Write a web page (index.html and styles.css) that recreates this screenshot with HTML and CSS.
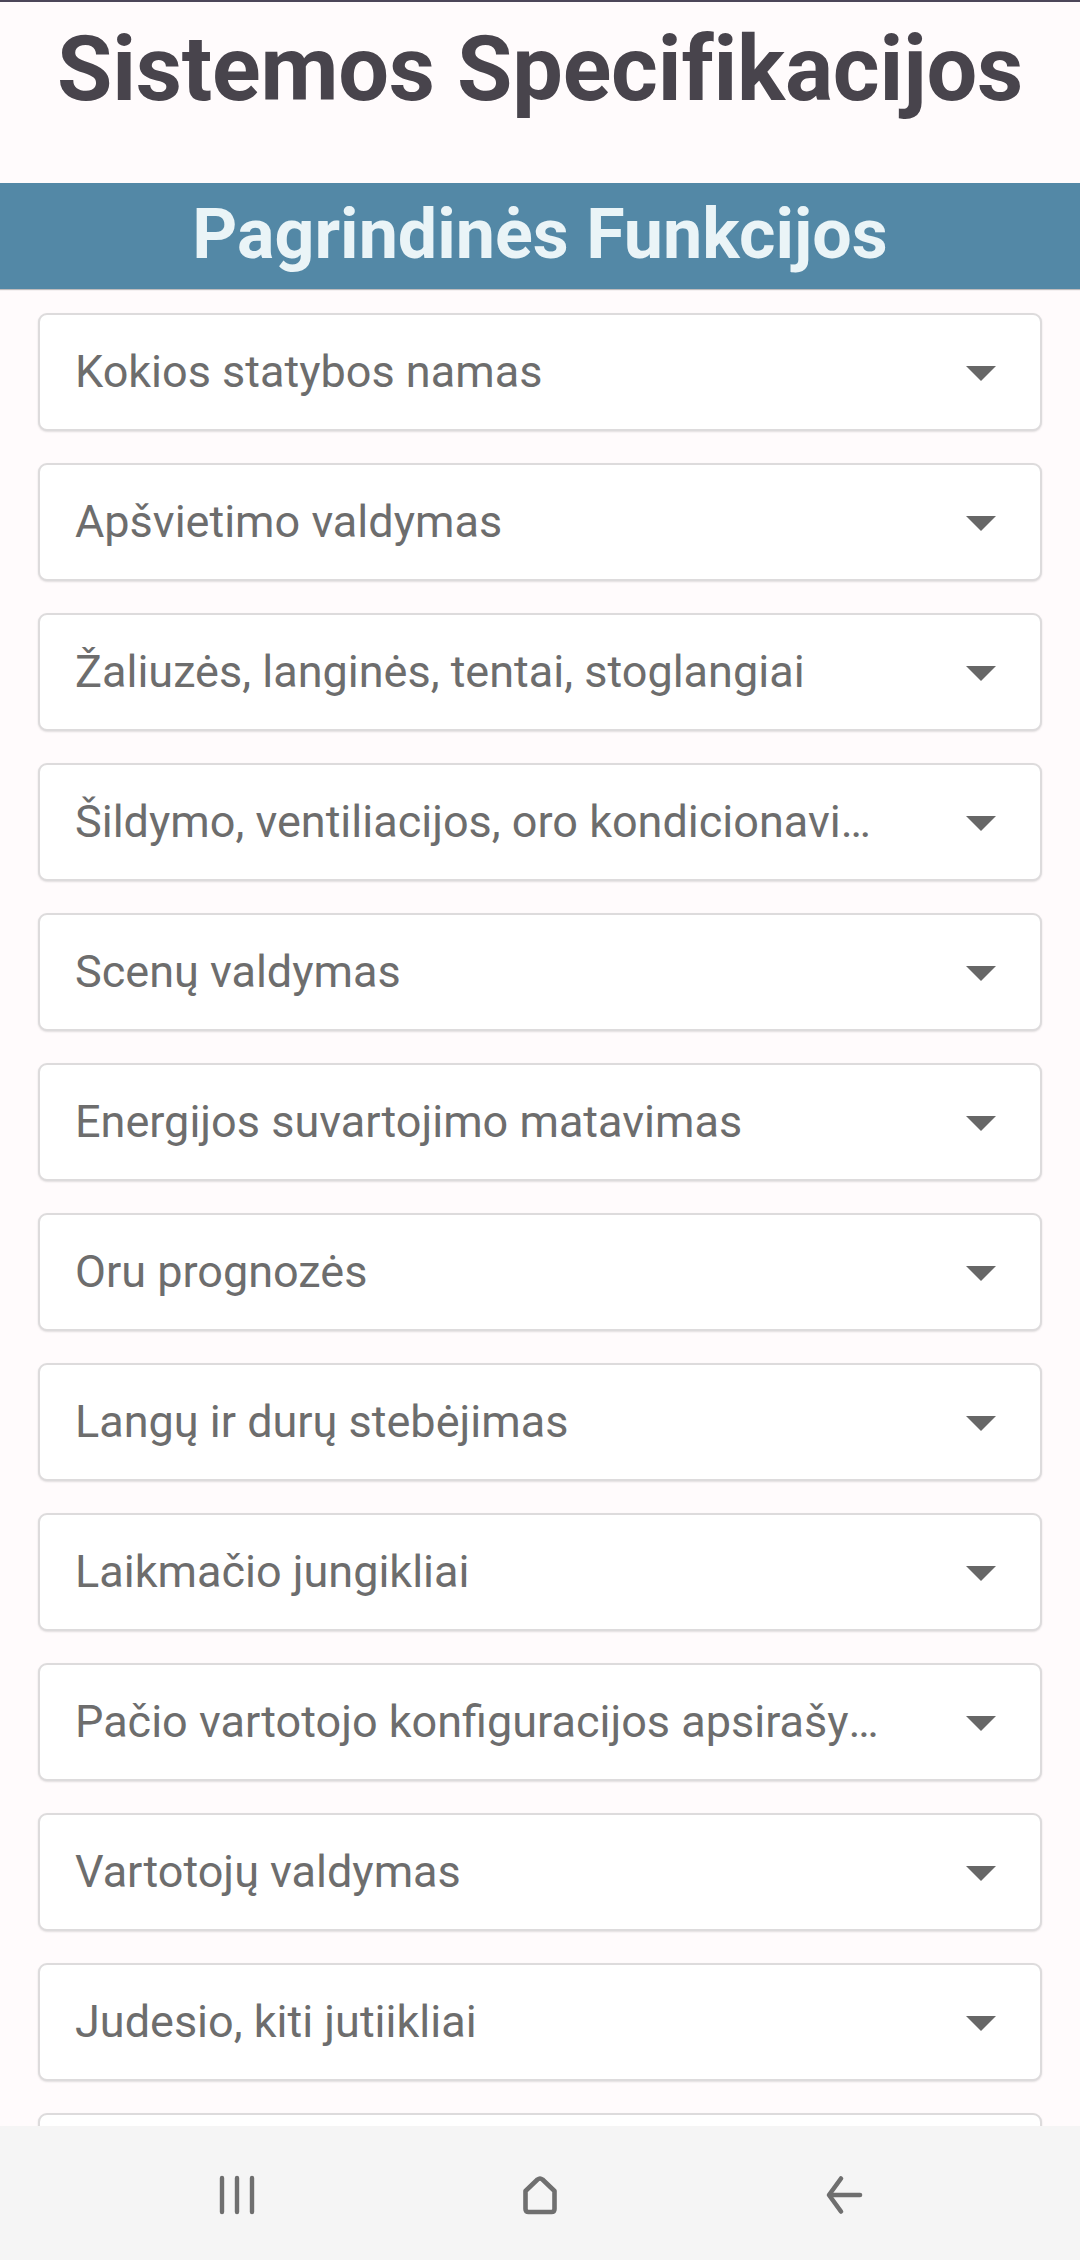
FILE: index.html
```html
<!DOCTYPE html>
<html lang="lt">
<head>
<meta charset="utf-8">
<title>Sistemos Specifikacijos</title>
<link rel="stylesheet" href="styles.css">
</head>
<body>
<div class="screen">
  <header class="page-header">
    <h1 class="page-title">Sistemos Specifikacijos</h1>
  </header>
  <div class="section-bar">
    <h2 class="section-title">Pagrindinės Funkcijos</h2>
  </div>
  <main class="list">
    <div class="select"><span class="select-label">Kokios statybos namas</span><span class="select-arrow"></span></div>
    <div class="select"><span class="select-label">Apšvietimo valdymas</span><span class="select-arrow"></span></div>
    <div class="select"><span class="select-label">Žaliuzės, langinės, tentai, stoglangiai</span><span class="select-arrow"></span></div>
    <div class="select"><span class="select-label">Šildymo, ventiliacijos, oro kondicionavimo valdymas</span><span class="select-arrow"></span></div>
    <div class="select"><span class="select-label">Scenų valdymas</span><span class="select-arrow"></span></div>
    <div class="select"><span class="select-label">Energijos suvartojimo matavimas</span><span class="select-arrow"></span></div>
    <div class="select"><span class="select-label">Oru prognozės</span><span class="select-arrow"></span></div>
    <div class="select"><span class="select-label">Langų ir durų stebėjimas</span><span class="select-arrow"></span></div>
    <div class="select"><span class="select-label">Laikmačio jungikliai</span><span class="select-arrow"></span></div>
    <div class="select"><span class="select-label">Pačio vartotojo konfiguracijos apsirašymas</span><span class="select-arrow"></span></div>
    <div class="select"><span class="select-label">Vartotojų valdymas</span><span class="select-arrow"></span></div>
    <div class="select"><span class="select-label">Judesio, kiti jutiikliai</span><span class="select-arrow"></span></div>
    <div class="select"><span class="select-label">Apsaugos sistema</span><span class="select-arrow"></span></div>
  </main>
</div>
<nav class="nav-bar">
  <svg class="nav-icon" width="40" height="40" viewBox="0 0 40 40" aria-label="Recents">
    <g stroke="#6f6f6f" stroke-width="4.4" stroke-linecap="round">
      <line x1="5" y1="3" x2="5" y2="37"/>
      <line x1="20" y1="3" x2="20" y2="37"/>
      <line x1="35" y1="3" x2="35" y2="37"/>
    </g>
  </svg>
  <svg class="nav-icon" width="40" height="40" viewBox="0 0 40 40" aria-label="Home">
    <path d="M5.5 16 L17.5 4.5 Q20 2.5 22.5 4.5 L34.5 16 L34.5 34 Q34.5 37 31.5 37 L8.5 37 Q5.5 37 5.5 34 Z" fill="none" stroke="#6f6f6f" stroke-width="4.6" stroke-linejoin="round"/>
  </svg>
  <svg class="nav-icon" width="40" height="40" viewBox="0 0 40 40" aria-label="Back">
    <g fill="none" stroke="#6f6f6f" stroke-width="4.6" stroke-linecap="round" stroke-linejoin="round">
      <path d="M18 3.5 L6 20 L18 36.5"/>
      <line x1="7" y1="20" x2="37" y2="20"/>
    </g>
  </svg>
</nav>
</body>
</html>
```
FILE: styles.css
```css
html, body {
  margin: 0;
  padding: 0;
}
body {
  background: #fffbfc;
  font-family: Roboto, "Noto Sans", "Liberation Sans", sans-serif;
  height: 2260px;
  overflow: hidden;
  border-top: 2px solid #4c4659;
  box-sizing: border-box;
}
.screen {
  display: flex;
  flex-direction: column;
}
.page-header {
  height: 181px;
  display: flex;
  justify-content: center;
}
.page-title {
  margin: 0;
  padding-top: 16px;
  font-size: 90px;
  line-height: 1.15;
  font-weight: 700;
  color: #48444c;
  letter-spacing: -0.2px;
}
.section-bar {
  height: 106px;
  background: #5388a6;
  display: flex;
  align-items: center;
  justify-content: center;
  box-shadow: 0 1px 1px rgba(0,0,0,0.25);
}
.section-title {
  margin: 0;
  font-size: 70px;
  font-weight: 700;
  color: #eaf4f7;
  line-height: 1;
  padding-bottom: 4px;
}
.list {
  padding: 24px 38px 0;
  display: flex;
  flex-direction: column;
  gap: 32px;
}
.select {
  height: 118px;
  box-sizing: border-box;
  background: #ffffff;
  border: 2px solid #dddbdc;
  border-radius: 9px;
  box-shadow: 0 1px 2px rgba(0,0,0,0.12);
  display: flex;
  align-items: center;
  padding: 0 44px 0 35px;
  gap: 86px;
  flex-shrink: 0;
}
.select-label {
  flex: 1;
  min-width: 0;
  font-size: 45px;
  color: #6d6d6d;
  white-space: nowrap;
  overflow: hidden;
  text-overflow: ellipsis;
  padding-bottom: 2px;
}
.select-arrow {
  width: 0;
  height: 0;
  border-left: 15px solid transparent;
  border-right: 15px solid transparent;
  border-top: 15px solid #676767;
  margin-top: 2px;
}
.nav-bar {
  position: fixed;
  left: 0;
  right: 0;
  bottom: 0;
  height: 134px;
  background: #f5f5f5;
  display: flex;
  justify-content: center;
  align-items: center;
  gap: 263px;
  padding-top: 4px;
  box-sizing: border-box;
}
.nav-icon {
  display: block;
}
```
